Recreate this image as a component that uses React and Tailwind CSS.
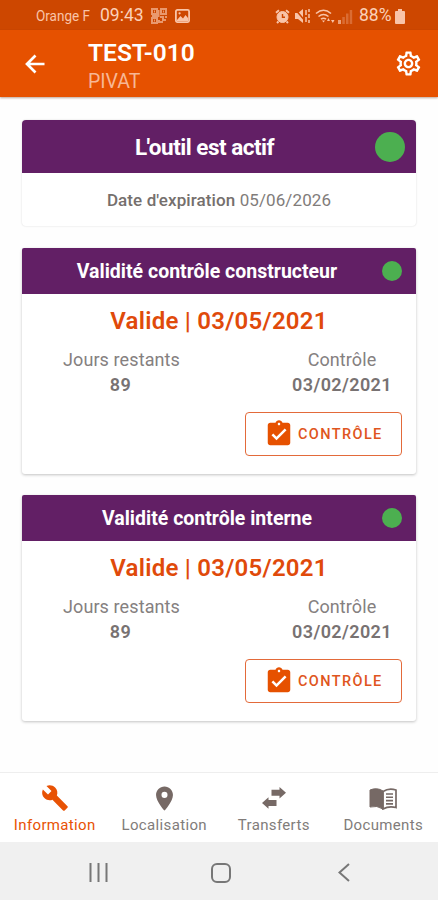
import React from "react";
import {
  MdOutlineSettings,
  MdBuild,
  MdLocationOn,
  MdAssignmentTurnedIn,
} from "react-icons/md";

function StatusBar() {
  return (
    <div className="flex h-[30px] shrink-0 items-center bg-[#cd4700] pt-[2px] pl-[36px] text-[#f9c4a8]">
      <span className="w-[64px] text-[15px] leading-none whitespace-nowrap"><span className="inline-block origin-left scale-x-[0.9]">Orange F</span></span>
      <span className="w-[51px] text-[17.5px] leading-none text-[#fbd0b8]">09:43</span>
      <svg width="16" height="16" viewBox="0 0 16 16" fill="none" stroke="currentColor" strokeWidth="2" opacity="0.65">
        <path d="M1 1h5v5H1zM10 1h5v5h-5zM1 10h5v5H1zM3 3.500h1M12 3.500h1M3 12.500h1M9 9h3v3h3M9 14h3M14 9h2M7.500 2v6H1M8 15v-3" />
      </svg>
      <svg className="ml-[8px]" width="15" height="14" viewBox="0 0 15 14">
        <rect x="0.900" y="0.900" width="13.200" height="12.200" rx="1.500" fill="none" stroke="currentColor" strokeWidth="1.800" />
        <path d="M2 11l3.500-4 2.500 2.500L10.500 6 13 9v3H2z" fill="currentColor" />
        <circle cx="4.600" cy="4.300" r="1.100" fill="currentColor" />
      </svg>
      <svg className="ml-[85px]" width="15" height="15" viewBox="0 0 15 15" fill="none" stroke="currentColor">
        <circle cx="7.500" cy="8" r="5.500" fill="currentColor" strokeWidth="1" />
        <path d="M1 3.800L4 1.200M14 3.800L11 1.200M3.500 12.500L2 14M11.500 12.500L13 14" strokeWidth="2" />
        <path d="M7.500 5v3.300H10" stroke="#cd4700" strokeWidth="1.400" />
      </svg>
      <svg className="ml-[5px]" width="16" height="16" viewBox="0 0 16 16">
        <path d="M0 5h3l5-4v14l-5-4H0z" fill="currentColor" />
        <path d="M0 1l11 13" stroke="#cd4700" strokeWidth="1.500" />
        <path d="M11 2v5M11 9v5M14 1v3M14 6v4M14 12v3" stroke="currentColor" strokeWidth="1.500" />
      </svg>
      <svg className="ml-[4px]" width="20" height="15" viewBox="0 0 20 15" fill="none" stroke="currentColor" strokeWidth="1.600">
        <path d="M1 4.500Q8.500-2 16 4.500M3.500 7.500q5-4 10 0M6 10.200q2.500-2 5 0" />
        <path d="M7 11.500h3l-1.500 2zM12 12l1.500-3 1.500 3zM16 11h3.500l-1.700 3z" fill="currentColor" stroke="none" />
      </svg>
      <svg className="ml-[3px]" width="15" height="15" viewBox="0 0 15 15" fill="currentColor">
        <path d="M0 11h3v4H0z" opacity="0.700" />
        <path d="M4.300 8h2.500v7H4.300zM8 4.500h2.500V15H8zM11.700 1h2.500v14h-2.500z" opacity="0.300" />
      </svg>
      <span className="ml-[6px] w-[33px] text-[17.5px] leading-none whitespace-nowrap text-[#fbd0b8]">88%</span>
      <svg className="ml-[3px]" width="10" height="15" viewBox="0 0 10 15" fill="currentColor">
        <path d="M3 0h4v2h2q1 0 1 1v11q0 1-1 1H1q-1 0-1-1V3q0-1 1-1h2z" />
      </svg>
    </div>
  );
}

function ControlCard({ title }) {
  return (
    <section className="h-[226px] rounded-[3px] bg-white shadow-[0_1px_3px_rgba(0,0,0,0.24)]">
      <div className="grid h-[46px] grid-cols-[10px_1fr_34px] items-center rounded-t-[2px] bg-[#621f65]">
        <h2 className="col-start-2 pt-[2px] text-center text-[19.5px] leading-6 font-bold whitespace-nowrap text-white">{title}</h2>
        <span className="size-5 rounded-full bg-[#4caf50]" />
      </div>
      <p className="mt-[11px] h-8 text-center text-[24px] leading-8 font-semibold tracking-[0.25px] text-[#e04a0a]">Valide | 03/05/2021</p>
      <div className="mt-[11px] flex justify-between pr-[24px] pl-[41px] text-center text-[18px] leading-[24.5px] text-[#858080]">
        <div>
          <p className="tracking-[0.1px]">Jours restants</p>
          <p className="-ml-[2px] font-semibold tracking-[0.4px] text-[#787272]">89</p>
        </div>
        <div>
          <p className="tracking-[0.1px]">Contrôle</p>
          <p className="font-semibold tracking-[0.4px] text-[#787272]">03/02/2021</p>
        </div>
      </div>
      <button className="mt-[15px] ml-[223px] flex h-[44px] w-[157px] items-center rounded-[4px] border border-[#e36a3a] pl-[18px] text-[#e65100]">
        <MdAssignmentTurnedIn className="mb-[1px] size-[30px]" />
        <span className="ml-[4px] pt-[3px] text-[14.5px] leading-none font-medium tracking-[1.4px] text-[#df5520]">CONTRÔLE</span>
      </button>
    </section>
  );
}

function NavItem({ label, icon, active }) {
  return (
    <div className={`flex flex-col items-center pt-[10px] ${active ? "text-[#e85204]" : "text-[#766965]"}`}>
      <div className="flex h-[30px] items-center">{icon}</div>
      <span className={`mt-[2px] text-[15px] leading-5 tracking-[0.35px] whitespace-nowrap ${active ? "" : "text-[#817c7a]"}`}>{label}</span>
    </div>
  );
}

export default function App() {
  return (
    <div className="flex h-[900px] w-[438px] flex-col overflow-hidden bg-[#fefefe] font-[Roboto,sans-serif]">
      <StatusBar />
      <header className="flex h-[67px] shrink-0 bg-[#e65100] text-white shadow-[0_1px_2px_rgba(90,30,0,0.4)]">
        <svg className="mt-[24px] ml-[25px]" width="20" height="20" viewBox="0 0 20 20" fill="none" stroke="currentColor" strokeWidth="2.700">
          <path d="M19.500 10H2.500M10.500 1.500L2 10l8.500 8.500" />
        </svg>
        <div className="ml-[43px] flex-1 pt-[8px]">
          <h1 className="text-[24.5px] leading-[30px] font-semibold">TEST-010</h1>
          <p className="text-[19.5px] leading-[28px] text-[#f7b795]">PIVAT</p>
        </div>
        <MdOutlineSettings className="mt-[19px] mr-[15px] size-[29px]" />
      </header>
      <main className="flex min-h-0 flex-1 flex-col pt-[23px] pr-[22px] pl-[22px]">
        <section className="h-[106px] rounded-[4px] bg-white shadow-[0_0_2px_rgba(0,0,0,0.16)]">
          <div className="grid h-[53px] grid-cols-[12px_1fr_41px] items-center rounded-t-[4px] bg-[#621f65]">
            <h2 className="col-start-2 pt-[1px] text-center text-[22.5px] leading-7 font-bold tracking-[-0.5px] text-white">L'outil est actif</h2>
            <span className="size-[30px] rounded-full bg-[#4caf50]" />
          </div>
          <p className="pt-[15px] text-center text-[17px] leading-6 tracking-[0.1px] text-[#817c7a]"><span className="font-medium text-[#756f6d]">Date d'expiration</span> 05/06/2026</p>
        </section>
        <div className="mt-[22px]"><ControlCard title="Validité contrôle constructeur" /></div>
        <div className="mt-[21px]"><ControlCard title="Validité contrôle interne" /></div>
      </main>
      <nav className="grid h-[70px] shrink-0 grid-cols-4 border-t border-[#eeeeee] bg-white">
        <NavItem active label="Information" icon={<MdBuild className="size-[28px]" />} />
        <NavItem label="Localisation" icon={<MdLocationOn className="size-[29px]" />} />
        <NavItem label="Transferts" icon={
          <svg width="24" height="22" viewBox="0 0 24 22" fill="currentColor">
            <path d="M9.500 2.700h8V0L24 5.700l-6.500 5.800V8.700h-8zM14.500 12.900h-8v-2.700L0 16l6.500 5.700V19h8z" />
          </svg>
        } />
        <NavItem label="Documents" icon={
          <svg className="mt-[2px]" width="28" height="22" viewBox="0 0 28 22" fill="none" stroke="currentColor">
            <path d="M14 3Q8-1 1 2v17q7-2 13 2z" fill="currentColor" strokeWidth="1" />
            <path d="M14 3.500Q20-.5 27 2v17.500q-7-2-13 1.500z" strokeWidth="1.700" />
            <path d="M17 6h7M17 9.300h7M17 12.600h7M17 15.900h7" strokeWidth="1.600" />
          </svg>
        } />
      </nav>
      <footer className="flex h-[58px] shrink-0 items-center bg-[#f0f0f0] pt-[3px] pl-[89px] text-[#777]">
        <svg width="19" height="19" viewBox="0 0 19 19" stroke="currentColor" strokeWidth="2"><path d="M1.500 0v19M9.500 0v19M17.500 0v19" /></svg>
        <svg className="ml-[103px]" width="20" height="20" viewBox="0 0 20 20" fill="none" stroke="currentColor" strokeWidth="2"><rect x="1" y="1" width="18" height="18" rx="5" /></svg>
        <svg className="ml-[107px]" width="12" height="19" viewBox="0 0 12 19" fill="none" stroke="currentColor" strokeWidth="2"><path d="M11 1L1.500 9.500 11 18" /></svg>
      </footer>
    </div>
  );
}
